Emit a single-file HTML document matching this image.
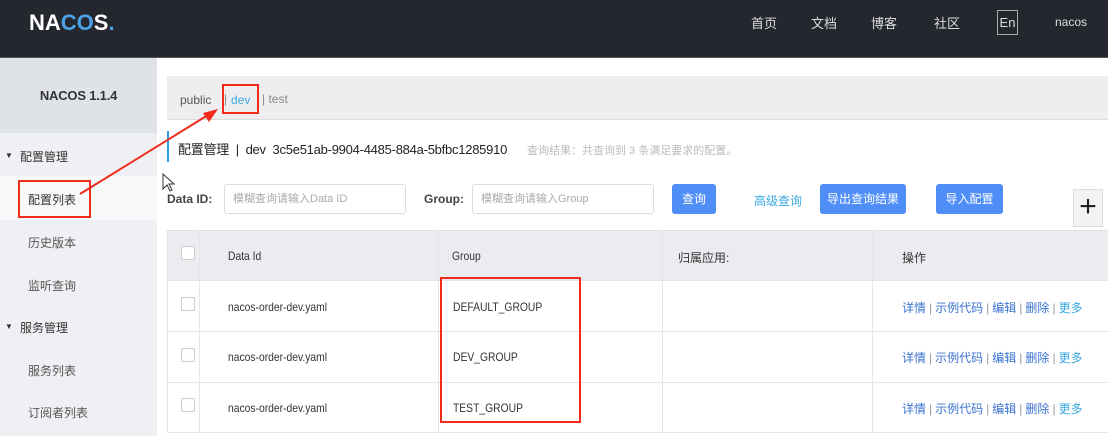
<!DOCTYPE html>
<html><head><meta charset="utf-8"><style>
*{box-sizing:border-box;margin:0;padding:0}
body{width:1108px;height:436px;overflow:hidden;background:#fff;font-family:"Liberation Sans","Noto Sans CJK SC",sans-serif;font-size:12px;color:#333;position:relative}
.abs{position:absolute}
.hdr{left:0;top:0;width:1108px;height:58px;background:#24272d;border-bottom:1px solid #555}
.nav{color:#ddd;font-size:13px;top:13px}
.side{left:0;top:58px;width:157px;height:378px;background:#eef0f3}
.sidetop{left:0;top:58px;width:157px;height:75px;background:#dfe2e7;text-align:center;line-height:75px;font-weight:bold;font-size:13px;color:#333;letter-spacing:-0.2px}
.mi{left:28px;font-size:12px;color:#555}
.mh{left:20px;font-size:12px;color:#333}
.tri{font-size:8px;color:#333;left:5px}
.btn{background:#4f8ef7;color:#fff;border-radius:3px;text-align:center;line-height:30px;height:30px;top:184px;font-size:12px}
.inp{border:1px solid #ddd;border-radius:3px;height:30px;top:184px;color:#aaa;padding-left:8px;line-height:28px;font-size:11px}
.row{left:167px;width:941px;border-bottom:1px solid #e6e6e6}
.cb{width:14px;height:14px;border:1px solid #ccc;border-radius:2px;background:#fff}
.cell{font-size:12px;color:#333;transform:scaleX(0.86);transform-origin:left top;white-space:nowrap}
.op{left:902px;color:#3b73d1;font-size:12px}
.op span{color:#999;margin:0 3px}
.red{border:2px solid #f02a1c}
</style></head><body>
<div class="abs hdr"></div>
<div class="abs" style="left:29px;top:10px;color:#fff;font-size:22px;font-weight:bold;letter-spacing:0px">NA<span style="color:#4aa3e8">CO</span>S<span style="color:#4aa3e8">.</span></div>
<div class="abs nav" style="left:751px">首页</div>
<div class="abs nav" style="left:811px">文档</div>
<div class="abs nav" style="left:871px">博客</div>
<div class="abs nav" style="left:934px">社区</div>
<div class="abs" style="left:997px;top:10px;width:21px;height:25px;border:1px solid #aaa;color:#ddd;font-size:13px;text-align:center;line-height:23px">En</div>
<div class="abs nav" style="left:1055px;font-size:12px;top:15px">nacos</div>

<div class="abs side"></div>
<div class="abs sidetop">NACOS 1.1.4</div>
<div class="abs" style="left:0;top:176px;width:157px;height:44px;background:#f7f8fa"></div>
<div class="abs tri" style="top:151px">▼</div><div class="abs mh" style="top:148px">配置管理</div>
<div class="abs mi" style="top:191px;color:#333">配置列表</div>
<div class="abs mi" style="top:234px">历史版本</div>
<div class="abs mi" style="top:277px">监听查询</div>
<div class="abs tri" style="top:322px">▼</div><div class="abs mh" style="top:319px">服务管理</div>
<div class="abs mi" style="top:362px">服务列表</div>
<div class="abs mi" style="top:404px">订阅者列表</div>

<div class="abs" style="left:167px;top:76px;width:941px;height:44px;background:#eeeef0;border-bottom:1px solid #ddd"></div>
<div class="abs" style="left:180px;top:93px;color:#555">public</div>
<div class="abs" style="left:224px;top:92px;color:#888">|</div>
<div class="abs" style="left:231px;top:93px;color:#3ba8e0">dev</div>
<div class="abs" style="left:262px;top:92px;color:#888">| test</div>

<div class="abs" style="left:167px;top:131px;width:2px;height:31px;background:#2d9be8"></div>
<div class="abs" style="left:178px;top:139px;font-size:13px;color:#222;letter-spacing:-0.25px">配置管理 &nbsp;|&nbsp; dev &nbsp;3c5e51ab-9904-4485-884a-5bfbc1285910</div>
<div class="abs" style="left:527px;top:142px;font-size:11px;color:#bbb">查询结果：共查询到 3 条满足要求的配置。</div>

<div class="abs" style="left:167px;top:192px;font-weight:bold;color:#444">Data ID:</div>
<div class="abs inp" style="left:224px;width:182px">模糊查询请输入Data ID</div>
<div class="abs" style="left:424px;top:192px;font-weight:bold;color:#444">Group:</div>
<div class="abs inp" style="left:472px;width:182px">模糊查询请输入Group</div>
<div class="abs btn" style="left:672px;width:44px">查询</div>
<div class="abs" style="left:754px;top:192px;color:#3ba8e0">高级查询</div>
<div class="abs btn" style="left:820px;width:86px">导出查询结果</div>
<div class="abs btn" style="left:936px;width:67px">导入配置</div>
<div class="abs" style="left:1073px;top:189px;width:30px;height:38px;background:#f2f2f2;border:1px solid #ddd;font-size:30px;line-height:34px;text-align:center;color:#222">+</div>

<div class="abs row" style="top:230px;height:51px;background:#ebecf0;border-top:1px solid #e0e0e0"></div>
<div class="abs row" style="top:281px;height:51px"></div>
<div class="abs row" style="top:332px;height:51px"></div>
<div class="abs row" style="top:383px;height:50px"></div>
<div class="abs" style="left:167px;top:230px;width:1px;height:203px;background:#e6e6e6"></div>
<div class="abs" style="left:199px;top:230px;width:1px;height:203px;background:#e6e6e6"></div>
<div class="abs" style="left:438px;top:230px;width:1px;height:203px;background:#e6e6e6"></div>
<div class="abs" style="left:662px;top:230px;width:1px;height:203px;background:#e6e6e6"></div>
<div class="abs" style="left:872px;top:230px;width:1px;height:203px;background:#e6e6e6"></div>

<div class="abs cb" style="left:181px;top:246px"></div>
<div class="abs cb" style="left:181px;top:297px"></div>
<div class="abs cb" style="left:181px;top:348px"></div>
<div class="abs cb" style="left:181px;top:398px"></div>
<div class="abs cell" style="left:228px;top:249px">Data Id</div>
<div class="abs cell" style="left:452px;top:249px">Group</div>
<div class="abs cell" style="left:678px;top:249px;transform:none">归属应用:</div>
<div class="abs cell" style="left:902px;top:249px;transform:none">操作</div>
<div class="abs cell" style="left:228px;top:300px">nacos-order-dev.yaml</div>
<div class="abs cell" style="left:228px;top:350px">nacos-order-dev.yaml</div>
<div class="abs cell" style="left:228px;top:401px">nacos-order-dev.yaml</div>
<div class="abs cell" style="left:453px;top:300px">DEFAULT_GROUP</div>
<div class="abs cell" style="left:453px;top:350px">DEV_GROUP</div>
<div class="abs cell" style="left:453px;top:401px">TEST_GROUP</div>
<div class="abs op" style="top:299px">详情<span>|</span>示例代码<span>|</span>编辑<span>|</span>删除<span>|</span><b style="font-weight:normal;color:#3ba8e0">更多</b></div>
<div class="abs op" style="top:349px">详情<span>|</span>示例代码<span>|</span>编辑<span>|</span>删除<span>|</span><b style="font-weight:normal;color:#3ba8e0">更多</b></div>
<div class="abs op" style="top:400px">详情<span>|</span>示例代码<span>|</span>编辑<span>|</span>删除<span>|</span><b style="font-weight:normal;color:#3ba8e0">更多</b></div>

<div class="abs red" style="left:222px;top:84px;width:37px;height:30px"></div>
<div class="abs red" style="left:18px;top:180px;width:73px;height:38px"></div>
<div class="abs red" style="left:440px;top:277px;width:141px;height:146px"></div>
<svg class="abs" style="left:0;top:0" width="1108" height="436"><line x1="80" y1="194" x2="208" y2="115" stroke="#f02a1c" stroke-width="2"/><polygon points="218,109 203,113 209,122" fill="#f02a1c"/>
<path d="M163 174 L163 189 L167 185 L170 191 L172 190 L169 184 L174 184 Z" fill="#fff" stroke="#333" stroke-width="1"/></svg>
</body></html>
